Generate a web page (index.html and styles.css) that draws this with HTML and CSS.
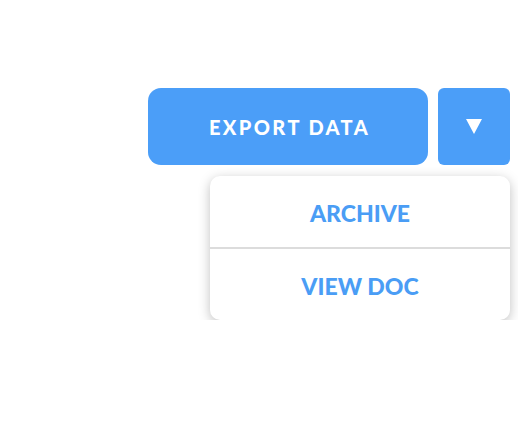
FILE: index.html
```html
<!DOCTYPE html>
<html>
<head>
<meta charset="utf-8">
<link rel="stylesheet" href="styles.css">
</head>
<body>
<div class="page">
  <div class="group">
    <div class="buttons">
      <button class="btn-main">EXPORT DATA</button>
      <button class="btn-toggle" aria-label="More options">
        <svg width="16" height="15" viewBox="0 0 16 15"><polygon points="0,0 16,0 8,15" fill="#fff"/></svg>
      </button>
    </div>
    <div class="menu">
      <div class="menu-item">ARCHIVE</div>
      <div class="menu-divider"></div>
      <div class="menu-item">VIEW DOC</div>
    </div>
  </div>
</div>
</body>
</html>
```

FILE: styles.css
```css
html, body {
  margin: 0;
  padding: 0;
  background: #ffffff;
}
.page {
  display: flex;
  justify-content: flex-end;
  padding: 88px 8px 0 0;
  font-family: "Lato", "Liberation Sans", sans-serif;
}
.group {
  display: flex;
  flex-direction: column;
  align-items: flex-end;
  gap: 11px;
}
.buttons {
  display: flex;
  gap: 10px;
}
.btn-main {
  width: 280px;
  height: 77px;
  border: none;
  border-radius: 13px;
  background: #4b9ef8;
  color: #ffffff;
  font-family: inherit;
  font-weight: 900;
  font-size: 20px;
  letter-spacing: 2.4px;
  padding: 0 0 0 3px;
}
.btn-toggle {
  width: 72px;
  height: 77px;
  border: none;
  border-radius: 6px;
  background: #4b9ef8;
  padding: 0;
  display: flex;
  align-items: center;
  justify-content: center;
}
.btn-toggle svg {
  display: block;
  margin-top: -1px;
}
.menu {
  width: 300px;
  background: #ffffff;
  border-radius: 10px;
  box-shadow: 0 3px 12px rgba(0, 0, 0, 0.25);
  display: flex;
  flex-direction: column;
}
.menu-item {
  height: 71px;
  display: flex;
  align-items: center;
  justify-content: center;
  color: #4a9df5;
  font-weight: 900;
  font-size: 23px;
  padding-top: 2px;
  box-sizing: border-box;
}
.menu-divider {
  height: 2px;
  background: #dcdcdc;
}
```
